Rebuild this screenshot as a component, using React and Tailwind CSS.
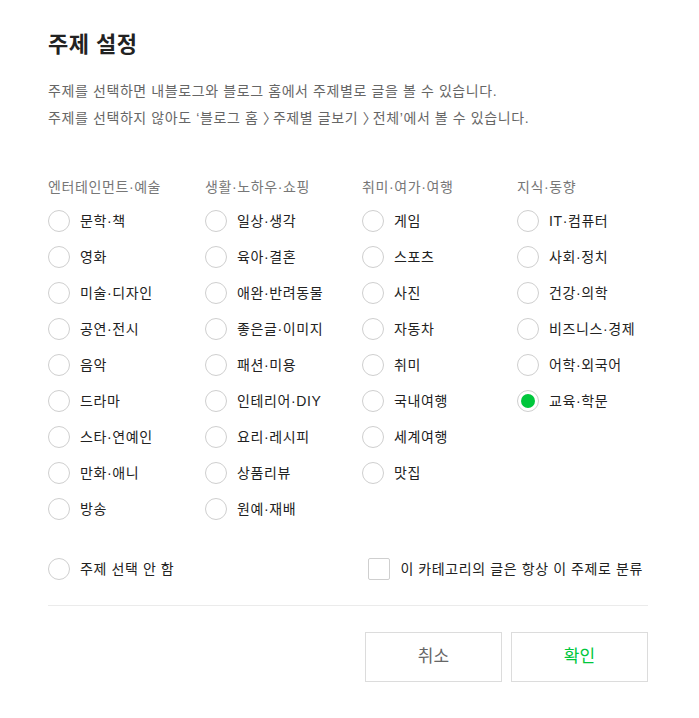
import React, { useState } from 'react'

const columns = [
  { title: '엔터테인먼트·예술', items: ['문학·책', '영화', '미술·디자인', '공연·전시', '음악', '드라마', '스타·연예인', '만화·애니', '방송'] },
  { title: '생활·노하우·쇼핑', items: ['일상·생각', '육아·결혼', '애완·반려동물', '좋은글·이미지', '패션·미용', '인테리어·DIY', '요리·레시피', '상품리뷰', '원예·재배'] },
  { title: '취미·여가·여행', items: ['게임', '스포츠', '사진', '자동차', '취미', '국내여행', '세계여행', '맛집'] },
  { title: '지식·동향', items: ['IT·컴퓨터', '사회·정치', '건강·의학', '비즈니스·경제', '어학·외국어', '교육·학문'] },
]

function Radio({ checked }) {
  return (
    <span className="w-[22px] h-[22px] rounded-full border border-[#cfcfcf] bg-white flex items-center justify-center flex-shrink-0">
      {checked && <span className="w-[14px] h-[14px] rounded-full bg-[#00c73c]" />}
    </span>
  )
}

export default function App() {
  const [selected, setSelected] = useState('교육·학문')
  const [always, setAlways] = useState(false)

  return (
    <div
      className="w-[699px] h-[718px] bg-white pl-12 pr-[51px] pt-[31px] text-[#222]"
      style={{ fontFamily: '"Liberation Sans", "Noto Sans CJK KR", sans-serif' }}
    >
      <h1 className="text-[22px] font-bold leading-[28px] tracking-[0.5px]">주제 설정</h1>

      <div className="mt-[19px] text-[14px] leading-[27px] text-[#666] tracking-[0.6px]">
        <p>주제를 선택하면 내블로그와 블로그 홈에서 주제별로 글을 볼 수 있습니다.</p>
        <p>
          주제를 선택하지 않아도 ‘블로그 홈 <span className="tracking-[-4px]">〉</span>주제별 글보기 <span className="tracking-[-4px]">〉</span>전체’에서 볼 수 있습니다.
        </p>
      </div>

      <div className="mt-[45px] grid grid-cols-[157px_157px_155px_1fr]">
        {columns.map(col => (
          <div key={col.title}>
            <div className="text-[14px] leading-[20px] text-[#777] tracking-[0.6px]">{col.title}</div>
            <ul className="mt-[6px]">
              {col.items.map(item => (
                <li
                  key={item}
                  onClick={() => setSelected(item)}
                  className="h-[36px] flex items-center gap-[10px] cursor-pointer text-[14px] tracking-[0.6px] text-[#222]"
                >
                  <Radio checked={selected === item} />
                  <span>{item}</span>
                </li>
              ))}
            </ul>
          </div>
        ))}
      </div>

      <div className="mt-[30px] flex items-center justify-between h-[24px] pr-[5px]">
        <div onClick={() => setSelected(null)} className="flex items-center gap-[10px] cursor-pointer text-[14px] tracking-[0.6px]">
          <Radio checked={selected === null} />
          <span>주제 선택 안 함</span>
        </div>
        <div onClick={() => setAlways(!always)} className="flex items-center gap-[10px] cursor-pointer text-[14px] tracking-[0.6px]">
          <span className="w-[22px] h-[22px] border border-[#cfcfcf] rounded-[2px] bg-white flex items-center justify-center">
            {always && <span className="w-[12px] h-[12px] bg-[#00c73c]" />}
          </span>
          <span>이 카테고리의 글은 항상 이 주제로 분류</span>
        </div>
      </div>

      <div className="mt-[24px] border-t border-[#ebebeb]" />

      <div className="mt-[26px] flex justify-end gap-[9px]">
        <button className="w-[137px] h-[50px] border border-[#dcdcdc] bg-white text-[17px] text-[#666]">취소</button>
        <button className="w-[137px] h-[50px] border border-[#dcdcdc] bg-white text-[17px] text-[#00c73c]">확인</button>
      </div>
    </div>
  )
}
